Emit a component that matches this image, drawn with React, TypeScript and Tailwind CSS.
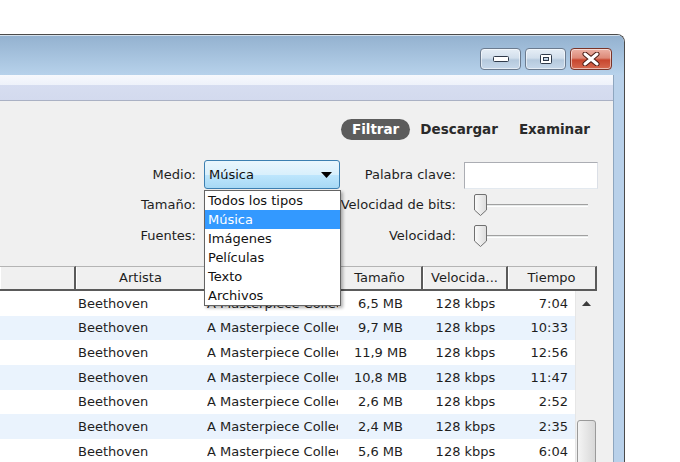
import type { ReactNode } from 'react'

const rows: [string, string][] = [
  ['6,5 MB', '7:04'],
  ['9,7 MB', '10:33'],
  ['11,9 MB', '12:56'],
  ['10,8 MB', '11:47'],
  ['2,6 MB', '2:52'],
  ['2,4 MB', '2:35'],
  ['5,6 MB', '6:04'],
]

const mediaTypes = ['Todos los tipos', 'Música', 'Imágenes', 'Películas', 'Texto', 'Archivos']

function CaptionButton({ kind }: { kind: 'min' | 'max' | 'close' }) {
  const isClose = kind === 'close'
  return (
    <div
      className={`grid h-[22px] place-items-center rounded-[4px] border ${
        isClose
          ? 'w-[42px] border-[#7a3428] bg-[linear-gradient(#ecb2a6_0%,#dd8a78_45%,#c8462e_55%,#d66a50_100%)]'
          : 'w-[41px] border-[#6b7b8f] bg-[linear-gradient(#e6eef6_0%,#d2dfec_45%,#b5c9dd_55%,#c6d8ea_100%)]'
      } shadow-[inset_0_0_0_1px_rgba(255,255,255,0.55)]`}
    >
      {kind === 'min' && (
        <svg width="18" height="8" viewBox="0 0 18 8">
          <rect x="1.5" y="1.5" width="15" height="5" rx="1" fill="#fff" stroke="#2f3a4a" />
        </svg>
      )}
      {kind === 'max' && (
        <svg width="14" height="12" viewBox="0 0 14 12">
          <rect x="1.5" y="1.5" width="11" height="9" rx="1" fill="none" stroke="#2f3a4a" strokeWidth="1" />
          <rect x="3" y="3" width="8" height="6" fill="none" stroke="#fff" strokeWidth="2" />
          <rect x="4.5" y="4.5" width="5" height="3" fill="none" stroke="#2f3a4a" strokeWidth="1" />
        </svg>
      )}
      {isClose && (
        <svg width="18" height="14" viewBox="0 0 18 14">
          <path d="M3 2 L15 12 M15 2 L3 12" stroke="#4a1c14" strokeWidth="5" strokeLinecap="round" />
          <path d="M3 2 L15 12 M15 2 L3 12" stroke="#fff" strokeWidth="3" strokeLinecap="round" />
        </svg>
      )}
    </div>
  )
}

function Slider() {
  return (
    <div className="relative h-[22px] w-[134px]">
      <div className="absolute left-[14px] top-[10px] h-[3px] w-[110px] border-t border-b border-[#a0a0a0] border-b-[#ffffff] bg-[#e7eaea]" />
      <svg className="absolute left-[10px] top-0" width="13" height="22" viewBox="0 0 13 22">
        <defs>
          <linearGradient id="thumb" x1="0" y1="0" x2="1" y2="0">
            <stop offset="0" stopColor="#fbfbfb" />
            <stop offset="1" stopColor="#dcdcdc" />
          </linearGradient>
        </defs>
        <path d="M2 0.5 H11 Q12.5 0.5 12.5 2 V16 L6.5 21.5 L0.5 16 V2 Q0.5 0.5 2 0.5 Z" fill="url(#thumb)" stroke="#707070" />
      </svg>
    </div>
  )
}

function Label({ children }: { children: ReactNode }) {
  return <div className="flex items-center justify-end whitespace-nowrap text-[13px] text-[#1e1e1e]">{children}</div>
}

export default function App() {
  return (
    <div className="relative h-[462px] w-[680px] overflow-hidden bg-white font-['DejaVu_Sans',Verdana,sans-serif]">
      <div className="mt-[34px] flex w-[625px] flex-col overflow-hidden rounded-tr-[8px] border-r border-t border-[#4b4b4b]">
        {/* title bar */}
        <div className="flex h-[40px] items-end justify-end gap-[4px] bg-[linear-gradient(#93b1cf,#b7d2eb)] pb-[5px] pr-[12px] shadow-[inset_0_1px_0_#d5e1ec]">
          <CaptionButton kind="min" />
          <CaptionButton kind="max" />
          <CaptionButton kind="close" />
        </div>

        <div className="flex">
          <div className="flex w-[613px] flex-col">
            {/* menu strip */}
            <div className="h-[26px] border-b border-[#aab1c4] bg-[linear-gradient(#f7f9fd_0%,#eef2fa_40%,#d6ddf0_42%,#d3daee_100%)]" />

            <div className="flex h-[400px] flex-col bg-[#f0f0f0]">
              {/* toolbar */}
              <div className="flex items-center justify-end pr-[23px] pt-[18px] text-[13.5px] font-bold">
                <span className="rounded-full bg-[#5c5c5c] px-[11px] py-[1px] leading-[19px] text-white">Filtrar</span>
                <span className="ml-[10px] text-[#2a2a2a]">Descargar</span>
                <span className="ml-[21px] text-[#2a2a2a]">Examinar</span>
              </div>

              {/* form */}
              <div className="mt-[20px] grid grid-cols-[196px_136px_108px_134px] grid-rows-[30px_30px_31px] gap-x-2">
                <Label>Medio:</Label>
                <div className="relative">
                  <div className="flex h-[29px] items-center justify-between rounded-[3px] border border-[#3c7fb1] bg-[linear-gradient(#eaf6fd_0%,#d9f0fc_50%,#bee6fd_51%,#a7d9f5_100%)] pl-[4px] pr-[7px] text-[13px] text-[#111]">
                    <span>Música</span>
                    <svg width="11" height="6" viewBox="0 0 11 6">
                      <path d="M0 0 H11 L5.5 6 Z" fill="#000" />
                    </svg>
                  </div>
                  <div className="absolute left-0 top-[30px] z-10 w-[137px] border border-[#646464] bg-white text-[13px] text-[#111] shadow-[2px_2px_3px_rgba(0,0,0,0.3)]">
                    {mediaTypes.map((t) => (
                      <div
                        key={t}
                        className={`flex h-[19px] items-center pl-[3px] ${t === 'Música' ? 'bg-[#3399ff] text-white' : ''}`}
                      >
                        {t}
                      </div>
                    ))}
                  </div>
                </div>
                <Label>Palabra clave:</Label>
                <div className="flex items-center">
                  <div className="h-[27px] w-[134px] border border-[#abadb3] border-b-[#e3e9ef] border-r-[#dbdfe6] bg-white" />
                </div>

                <Label>Tamaño:</Label>
                <div />
                <Label>Velocidad de bits:</Label>
                <div className="flex items-center">
                  <Slider />
                </div>

                <Label>Fuentes:</Label>
                <div />
                <Label>Velocidad:</Label>
                <div className="flex items-center">
                  <Slider />
                </div>
              </div>

              {/* table */}
              <div className="mt-[15px] w-[597px]">
                <div className="grid h-[25px] grid-cols-[76px_131px_131px_85px_85px_89px] text-[13px] text-[#1e1e1e]">
                  {['', 'Artista', '', 'Tamaño', 'Velocida...', 'Tiempo'].map((h, i) => (
                    <div
                      key={i}
                      className="flex items-center justify-center border-b-2 border-r-2 border-t border-[#5a5a5a] border-t-[#b4b4b4] bg-[#f0f0f0] shadow-[inset_1px_0_0_#ffffff]"
                    >
                      {h}
                    </div>
                  ))}
                </div>
                <div className="flex">
                  <div className="w-[575px] bg-white text-[13px] text-[#1e1e1e]">
                    {rows.map(([size, time], i) => (
                      <div
                        key={i}
                        className={`grid h-[24.67px] grid-cols-[76px_131px_131px_85px_85px_67px] items-center ${
                          i % 2 === 1 ? 'bg-[#eaf3fd]' : 'bg-white'
                        }`}
                      >
                        <div />
                        <div className="overflow-hidden whitespace-nowrap pl-[2px]">Beethoven</div>
                        <div className="overflow-hidden whitespace-nowrap">A Masterpiece Collection</div>
                        <div className="text-center">{size}</div>
                        <div className="text-center">128 kbps</div>
                        <div className="pr-[7px] text-right">{time}</div>
                      </div>
                    ))}
                  </div>
                  {/* scrollbar */}
                  <div className="relative w-[22px] border-l border-[#e6e6e6] bg-[#f0f0f0]">
                    <svg className="absolute left-[6px] top-[10px]" width="9" height="5" viewBox="0 0 9 5">
                      <path d="M0 5 L4.5 0 L9 5 Z" fill="#3c3c3c" />
                    </svg>
                    <div className="absolute left-[1px] top-[129px] h-[60px] w-[19px] rounded-[3px] border border-[#9a9a9a] bg-[linear-gradient(90deg,#f4f4f4,#e6e6e6_50%,#d8d8d8)]" />
                  </div>
                </div>
              </div>
            </div>
          </div>
          {/* right frame */}
          <div className="w-[11px] border-l border-[#8ea6bf] bg-[#b9d1ea]" />
        </div>
      </div>
    </div>
  )
}
